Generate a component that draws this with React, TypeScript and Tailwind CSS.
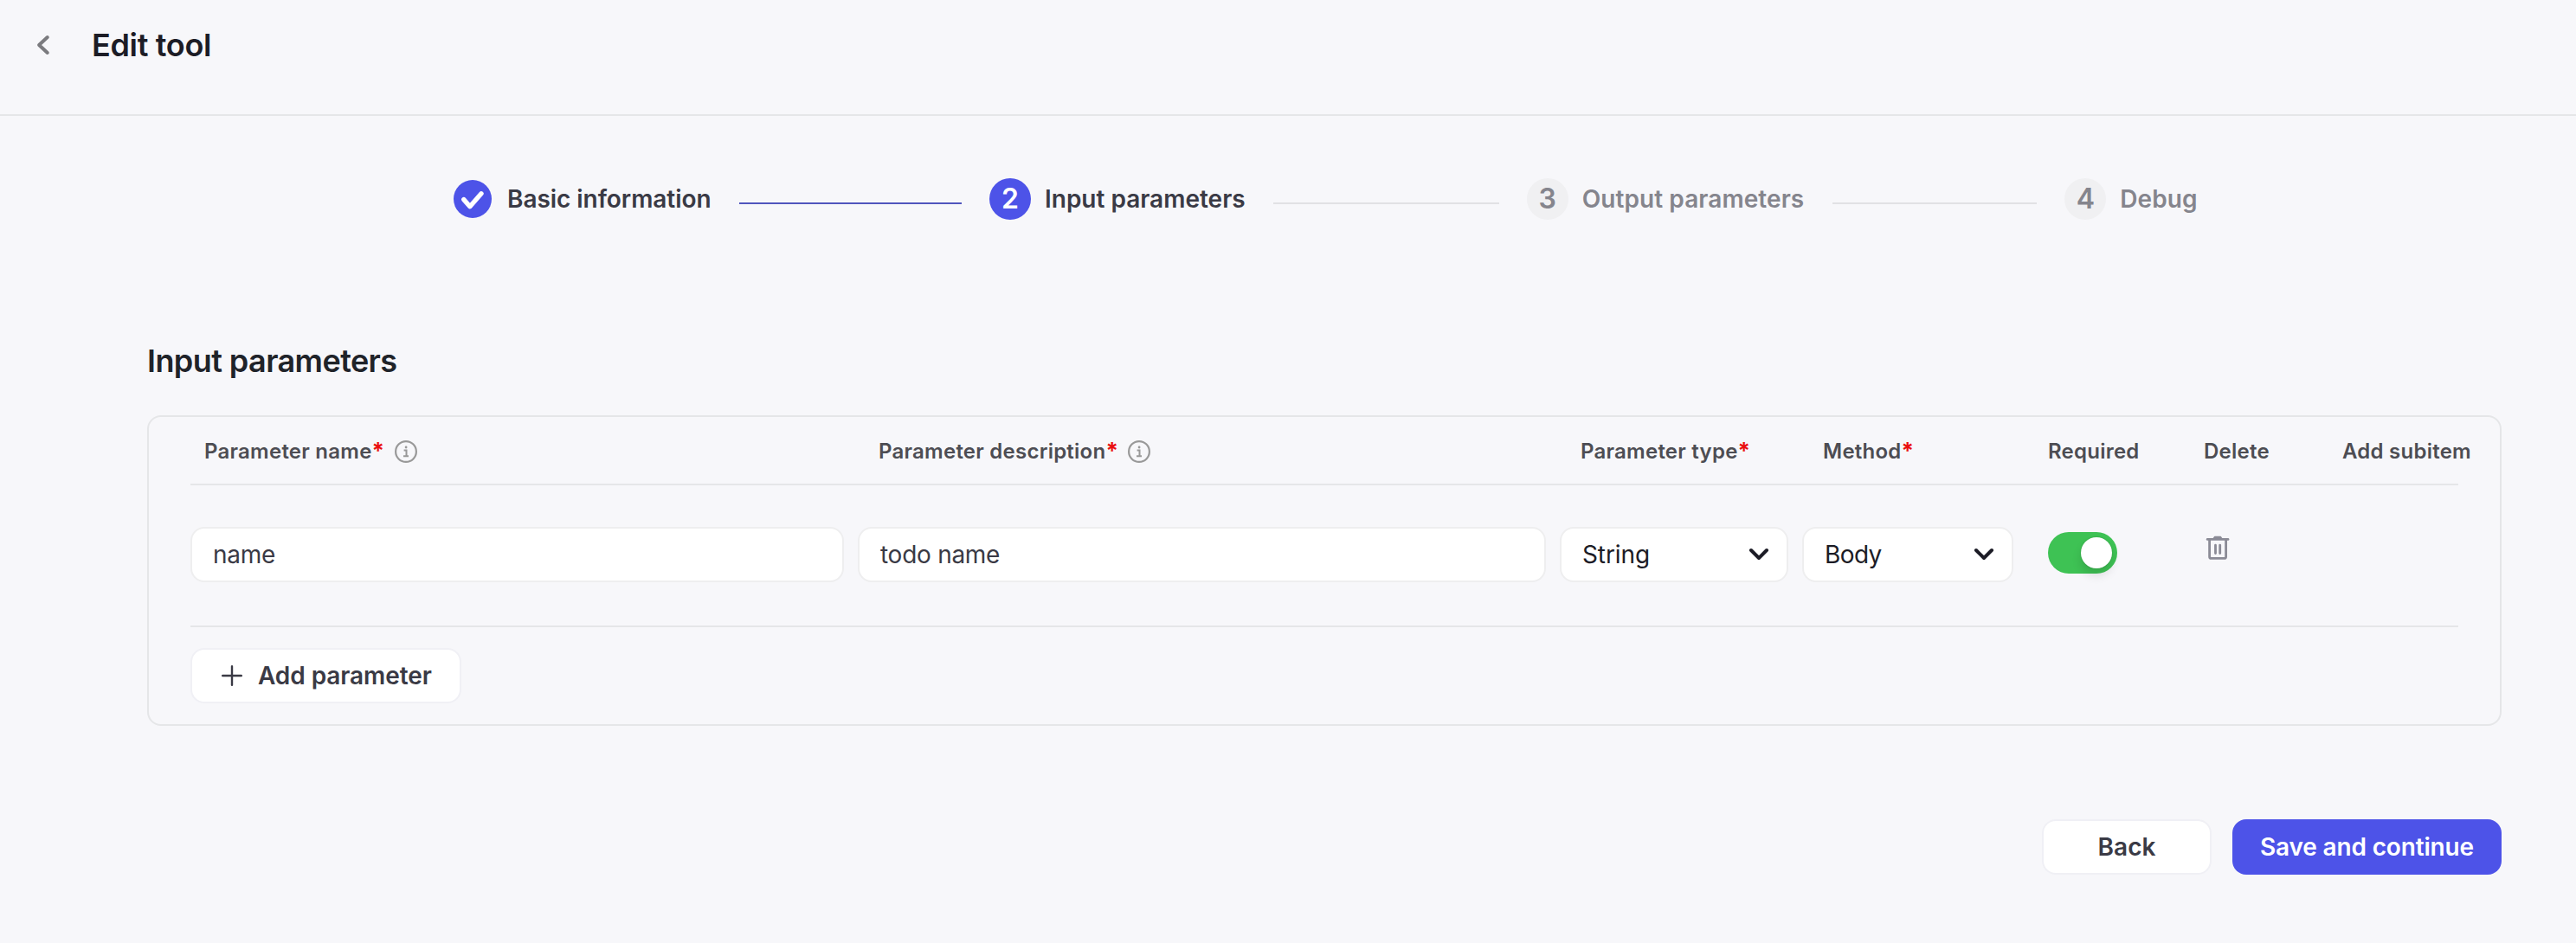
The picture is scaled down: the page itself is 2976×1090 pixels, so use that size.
import type { ReactNode } from "react";

function Required() {
  return <span className="relative top-[-1px] inline-block w-[12px] text-[26px] leading-8 font-bold tracking-normal text-[#ea0f0f]">*</span>;
}

function InfoIcon() {
  return (
    <svg viewBox="0 0 26 26" className="ml-[14px] h-[26px] w-[26px]" fill="none" stroke="#999999">
      <circle cx="13" cy="13" r="11.9" strokeWidth="2.2" />
      <path d="M10.6 11.4h2.9v6.6M10 18.2h6" strokeWidth="2" />
      <circle cx="13.1" cy="8" r="1.4" fill="#999999" stroke="none" />
    </svg>
  );
}

function ChevronDown() {
  return (
    <svg viewBox="0 0 24 16" className="mt-[-1px] h-4 w-6" fill="none" stroke="#1c1c26" strokeWidth="4" strokeLinecap="round" strokeLinejoin="round">
      <path d="M3 3l9 9 9-9" />
    </svg>
  );
}

function TrashIcon() {
  return (
    <svg viewBox="0 0 28 28" className="h-7 w-7" fill="none" stroke="#8b8b96" strokeWidth="2.8" strokeLinecap="round" strokeLinejoin="round">
      <path d="M2.2 4.4h23.8" />
      <path d="M9 4L10.6 1.6h6.8L19 4z" fill="#8b8b96" strokeWidth="1.6" />
      <path d="M4.6 5v19.4a2 2 0 0 0 2 2h15a2 2 0 0 0 2-2V5" />
      <path d="M11.5 11.2v9.4M16.7 11.2v9.4" strokeWidth="2.8" />
    </svg>
  );
}

function Select({ width, children }: { width: string; children: ReactNode }) {
  return (
    <div className={`flex h-16 items-center justify-between rounded-2xl border-2 border-[#eeeeef] bg-white pr-5 pl-6 text-[#1c1c26] ${width}`}>
      {children}
      <ChevronDown />
    </div>
  );
}

function Step({ n, label, active }: { n: number; label: string; active?: boolean }) {
  return (
    <>
      <div className={`flex h-12 w-12 shrink-0 items-center justify-center rounded-full text-[32px] font-semibold ${active ? "bg-[#4d53e8] text-white" : "bg-[#f0f0f2] text-[#85858d]"}`}>
        {n}
      </div>
      <span className={`ml-4 ${active ? "text-[#3a3a45]" : "tracking-[0.08px] text-[#85858d]"}`}>{label}</span>
    </>
  );
}

export default function App() {
  return (
    <div className="h-[1090px] w-[2976px] bg-[#f7f7fa] font-['Inter',sans-serif] whitespace-nowrap">
      <header className="flex h-[134px] items-start border-b-2 border-[#e5e6e8] pt-8">
        <svg viewBox="0 0 16 24" className="mt-2 ml-[42px] h-6 w-4" fill="none" stroke="#7b7b7f" strokeWidth="4" strokeLinecap="round" strokeLinejoin="round">
          <path d="M12.8 3L3.1 12l9.7 9" />
        </svg>
        <h1 className="ml-12 text-[36px] leading-10 font-semibold tracking-[-0.33px] text-[#1c1c26]">Edit tool</h1>
      </header>

      <nav className="mt-[72px] ml-[524px] flex h-12 items-center text-[28px] font-semibold">
        <svg viewBox="0 0 44 44" className="h-11 w-11">
          <circle cx="22" cy="22" r="22" fill="#4d53e8" />
          <path d="M11.8 22.6l7.1 8.1L32 15.8" fill="none" stroke="#fff" strokeWidth="5.4" strokeLinecap="round" strokeLinejoin="round" />
        </svg>
        <span className="ml-[18px] w-[268px] tracking-[-0.05px] text-[#3a3a45]">Basic information</span>
        <div className="mt-[10px] mr-8 h-0.5 w-[257px] bg-[#5055bd]" />
        <Step n={2} label="Input parameters" active />
        <div className="mt-[10px] mr-8 ml-8 h-0.5 w-[261px] bg-[#e1e1e4]" />
        <Step n={3} label="Output parameters" />
        <div className="mt-[10px] mr-8 ml-[33px] h-0.5 w-[236px] bg-[#e1e1e4]" />
        <Step n={4} label="Debug" />
      </nav>

      <main className="mr-[86px] ml-[170px] pt-[143px]">
        <h2 className="text-[36px] leading-10 font-semibold tracking-[-0.58px] text-[#1f2329]">Input parameters</h2>

        <section className="mt-[43px] h-[359px] rounded-2xl border-2 border-[#e5e6e8] px-12">
          <div className="grid h-[79px] grid-cols-[779px_811px_280px_260px_180px_160px_auto] items-center border-b-2 border-[#e5e6e8] pt-0.5 pl-4 text-[24px] leading-8 font-semibold tracking-[0.24px] text-[#4d4d53]">
            <div className="flex items-center">Parameter name<Required /><InfoIcon /></div>
            <div className="flex items-center">Parameter description<Required /><InfoIcon /></div>
            <div className="flex items-center">Parameter type<Required /></div>
            <div className="flex items-center">Method<Required /></div>
            <div>Required</div>
            <div>Delete</div>
            <div>Add subitem</div>
          </div>

          <div className="flex h-[164px] items-center border-b-2 border-[#e5e6e8] pb-0.5 text-[28px]">
            <div className="flex h-16 w-[755px] items-center rounded-2xl border-2 border-[#eeeeef] bg-white pl-6 tracking-[-0.27px] text-[#3a3a45]">name</div>
            <div className="mr-4 ml-4 flex h-16 w-[795px] items-center rounded-2xl border-2 border-[#eeeeef] bg-white pl-6 tracking-[-0.27px] text-[#3a3a45]">todo name</div>
            <Select width="w-[264px] mr-4 tracking-[-0.1px]">String</Select>
            <Select width="w-[244px] tracking-[-0.6px]">Body</Select>
            <div className="mb-1 ml-10 flex h-12 w-20 items-center justify-end rounded-full bg-[#3ec254] pr-1.5">
              <div className="h-9 w-9 rounded-full bg-white shadow-[0_8px_12px_rgba(0,0,0,0.12),0_0_2px_rgba(0,0,0,0.2)]" />
            </div>
            <div className="mb-4 ml-[102px]"><TrashIcon /></div>
          </div>

          <button className="mt-6 flex h-16 w-[313px] items-center rounded-2xl border-2 border-[#f0f0f5] bg-white pl-[34px] text-[28px] font-semibold tracking-[-0.08px] text-[#3a3a45]">
            <svg viewBox="0 0 24 24" className="mr-[18px] h-6 w-6" fill="none" stroke="#3a3a45" strokeWidth="2.4" strokeLinecap="round">
              <path d="M12 1.2v21.6M1.2 12h21.6" />
            </svg>
            Add parameter
          </button>
        </section>

        <div className="mt-[108px] flex justify-end gap-6 text-[28px] font-semibold">
          <button className="h-16 w-[196px] rounded-2xl border-2 border-[#f0f0f5] bg-white text-[#3a3a45]">Back</button>
          <button className="h-16 w-[311px] rounded-2xl bg-[#4d53e8] tracking-[-0.16px] text-white">Save and continue</button>
        </div>
      </main>
    </div>
  );
}
